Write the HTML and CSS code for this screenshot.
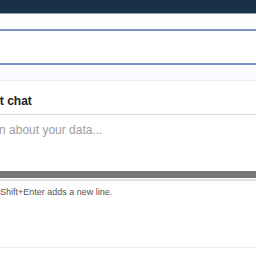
FILE: index.html
```html
<!DOCTYPE html>
<html>
<head>
<meta charset="utf-8">
<link rel="stylesheet" href="styles.css">
</head>
<body>
<div class="header"></div>
<div class="toolbar"></div>
<div class="field"></div>
<div class="strip"></div>
<div class="panel">
  <div class="panel-title"><span class="shift-title">Start chat</span></div>
  <div class="input"><span class="shift-ph">Ask a question about your data...</span></div>
  <div class="scrollbar"></div>
  <div class="hint"><span class="shift-hint">Enter sends, Shift+Enter adds a new line.</span></div>
</div>
</body>
</html>
```
FILE: styles.css
```css
html, body { margin: 0; padding: 0; background: #fff; overflow: hidden; }
body { font-family: "Liberation Sans", Arial, sans-serif; width: 256px; height: 256px; }
.header { height: 13px; background: #1a3049; border-bottom: 1px solid #8d99a6; }
.toolbar { height: 15px; background: #fdfeff; }
.field { height: 32px; background: #fff; border-top: 2px solid #7d92c4; border-bottom: 2px solid #7d92c4; }
.strip { height: 15px; background: #f9fbff; border-bottom: 1px solid #eceff2; }
.panel { white-space: nowrap; }
.panel-title { height: 33px; border-bottom: 1px solid #dcdcdc; font-weight: bold; font-size: 12px; color: #222; line-height: 40px; }
.shift-title { margin-left: -23.5px; display: inline-block; }
.input { height: 56px; font-size: 12px; color: #9e9e9e; line-height: 16px; }
.shift-ph { margin-left: -73px; display: inline-block; padding-top: 7px; }
.scrollbar { height: 7px; background: #777; border-bottom: 1px solid #fff; }
.hint { border-top: 2px solid #e2e2e2; height: 66px; border-bottom: 1px solid #ececec; font-size: 9px; color: #555; line-height: 12px; }
.shift-hint { margin-left: -53px; display: inline-block; padding-top: 5px; }
```
